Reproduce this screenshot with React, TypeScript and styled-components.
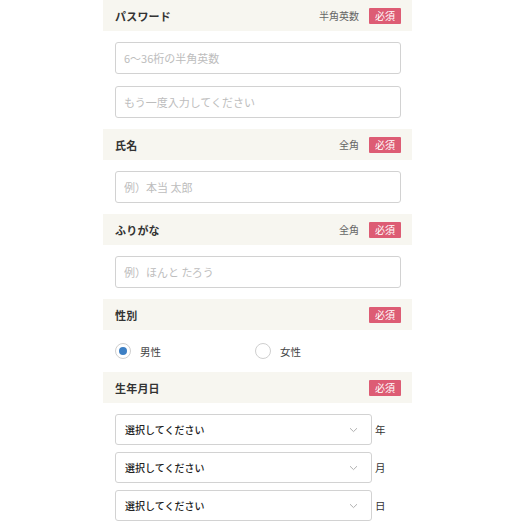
import React from "react";
import styled, { createGlobalStyle } from "styled-components";

const Global = createGlobalStyle`
  html, body { margin: 0; padding: 0; background: #fff; }
  body { font-family: "Noto Sans CJK JP", "Noto Sans", sans-serif; color: #333; }
  * { box-sizing: border-box; }
`;

const Form = styled.div`
  width: 309px;
  margin: 0 0 0 103px;
`;

const Header = styled.div`
  height: 31px;
  background: #f7f6f0;
  display: flex;
  align-items: center;
  padding: 0 11px 0 12px;
`;

const Label = styled.span`
  font-size: 11px;
  font-weight: 700;
  color: #333;
  flex: 1;
  letter-spacing: 0.2px;
`;

const Note = styled.span`
  font-size: 10px;
  color: #666;
  margin-right: 10px;
`;

const Badge = styled.span`
  background: #dd5c74;
  color: #fff;
  font-size: 10px;
  height: 16px;
  width: 32px;
  display: flex;
  align-items: center;
  justify-content: center;
  border-radius: 1px;
`;

const Body = styled.div<{ $gap?: number }>`
  padding: 11px 11px 11px 12px;
  display: flex;
  flex-direction: column;
  gap: ${(p) => p.$gap ?? 12}px;
`;

const Input = styled.input`
  height: 32px;
  width: 100%;
  border: 1px solid #d2d2d2;
  border-radius: 3px;
  padding: 0 8px;
  font-family: inherit;
  font-size: 11px;
  color: #333;
  outline: none;
  &::placeholder { color: #bdbdbd; }
`;

const RadioRow = styled.div`
  display: grid;
  grid-template-columns: 140px 1fr;
  height: 20px;
  align-items: center;
`;

const RadioItem = styled.label`
  display: flex;
  align-items: center;
  gap: 9px;
  font-size: 10.5px;
  color: #444;
`;

const RadioCircle = styled.span<{ $on?: boolean }>`
  width: 16px;
  height: 16px;
  border-radius: 50%;
  border: 1px solid #cfcfcf;
  display: flex;
  align-items: center;
  justify-content: center;
  &::after {
    content: "";
    width: 8px;
    height: 8px;
    border-radius: 50%;
    background: ${(p) => (p.$on ? "#3d7fc4" : "transparent")};
  }
`;

const SelectRow = styled.div`
  display: grid;
  grid-template-columns: 1fr 29px;
  align-items: center;
`;

const SelectBox = styled.div`
  height: 31px;
  border: 1px solid #d2d2d2;
  border-radius: 3px;
  display: flex;
  align-items: center;
  padding: 0 13px 0 9px;
  font-size: 10px;
  font-weight: 500;
  color: #222;
`;

const SelectText = styled.span`
  flex: 1;
`;

const Unit = styled.span`
  font-size: 10.5px;
  color: #333;
  padding-left: 3px;
`;

const Chevron = () => (
  <svg width="9" height="6" viewBox="0 0 9 6">
    <path d="M1 1.2 L4.5 4.6 L8 1.2" fill="none" stroke="#b0b0b0" strokeWidth="1" />
  </svg>
);

const Section = ({
  label,
  note,
  children,
}: {
  label: string;
  note?: string;
  children: React.ReactNode;
}) => (
  <>
    <Header>
      <Label>{label}</Label>
      {note && <Note>{note}</Note>}
      <Badge>必須</Badge>
    </Header>
    {children}
  </>
);

export default function App() {
  return (
    <>
      <Global />
      <Form>
        <Section label="パスワード" note="半角英数">
          <Body>
            <Input placeholder="6〜36桁の半角英数" />
            <Input placeholder="もう一度入力してください" />
          </Body>
        </Section>
        <Section label="氏名" note="全角">
          <Body>
            <Input placeholder="例）本当 太郎" />
          </Body>
        </Section>
        <Section label="ふりがな" note="全角">
          <Body>
            <Input placeholder="例）ほんと たろう" />
          </Body>
        </Section>
        <Section label="性別">
          <Body>
            <RadioRow>
              <RadioItem>
                <RadioCircle $on />
                男性
              </RadioItem>
              <RadioItem>
                <RadioCircle />
                女性
              </RadioItem>
            </RadioRow>
          </Body>
        </Section>
        <Section label="生年月日">
          <Body $gap={7}>
            {["年", "月", "日"].map((u) => (
              <SelectRow key={u}>
                <SelectBox>
                  <SelectText>選択してください</SelectText>
                  <Chevron />
                </SelectBox>
                <Unit>{u}</Unit>
              </SelectRow>
            ))}
          </Body>
        </Section>
      </Form>
    </>
  );
}
